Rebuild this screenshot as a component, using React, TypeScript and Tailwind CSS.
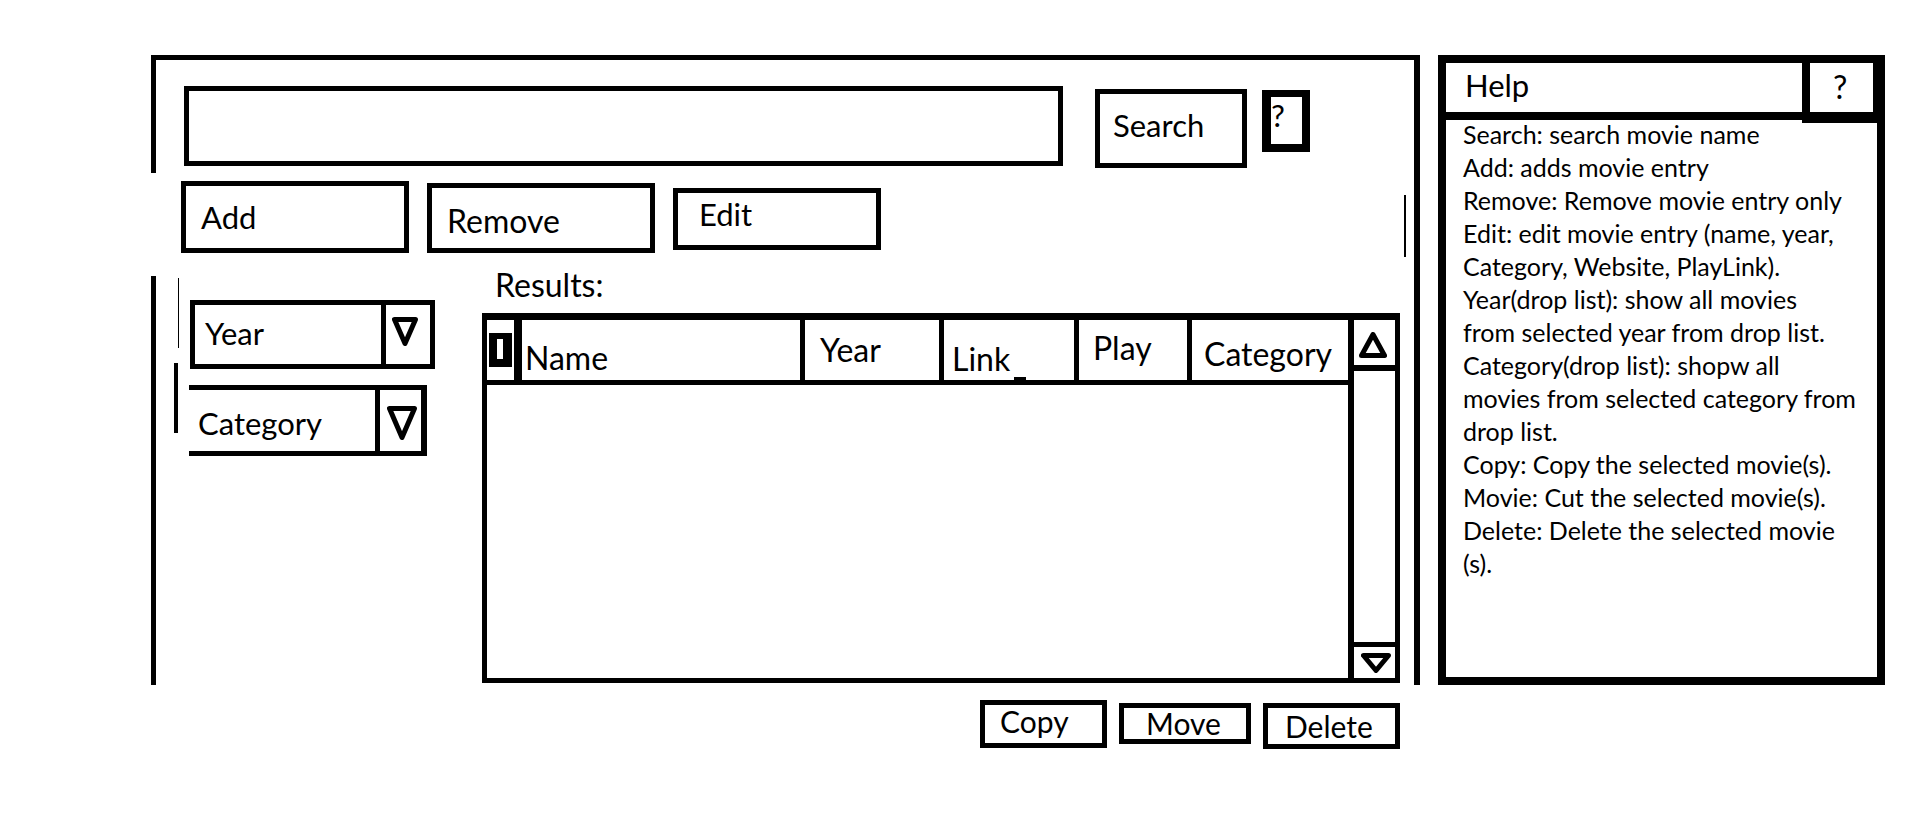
import React from 'react';

// outlined triangle used by the drop lists and the scroll bar
const Tri = ({ up = false, w, h, stroke = 5 }: { up?: boolean; w: number; h: number; stroke?: number }) => {
  const s = stroke / 2;
  const pts = up
    ? `${w / 2},${s} ${w - s},${h - s} ${s},${h - s}`
    : `${s},${s} ${w - s},${s} ${w / 2},${h - s}`;
  return (
    <svg width={w} height={h} viewBox={`0 0 ${w} ${h}`} className="block">
      <polygon points={pts} fill="none" stroke="black" strokeWidth={stroke} strokeLinejoin="round" />
    </svg>
  );
};

const helpLines = [
  'Search: search movie name',
  'Add: adds movie entry',
  'Remove: Remove movie entry only',
  'Edit: edit movie entry (name, year,',
  'Category, Website, PlayLink).',
  'Year(drop list): show all movies',
  'from selected year from drop list.',
  'Category(drop list): shopw all',
  'movies from selected category from',
  'drop list.',
  'Copy: Copy the selected movie(s).',
  'Movie: Cut the selected movie(s).',
  'Delete: Delete the selected movie',
  '(s).',
];

export default function App() {
  return (
    <div className="w-[1912px] h-[828px] bg-white text-black font-['Lato',sans-serif] flex flex-col overflow-hidden">
      <div className="flex items-start pt-[55px] pl-[151px]">
        {/* main window */}
        <div className="w-[1269px] h-[630px] border-t-[5px] border-r-[6px] border-black flex shrink-0">
          <div className="w-[5px] flex flex-col shrink-0">
            <div className="h-[114px] bg-black" />
            <div className="mt-[103px] h-[411px] bg-black" />
          </div>
          <div className="flex-1 flex flex-col">
            {/* search row */}
            <div className="flex items-start">
              <div className="ml-[28px] mt-[26px] w-[879px] h-[80px] border-[5px] border-black" />
              <div className="ml-[32px] mt-[29px] w-[152px] h-[79px] border-[5px] border-black pl-[13px] pt-[16px] text-[31px] leading-none">
                Search
              </div>
              <div className="ml-[15px] mt-[30px] w-[48px] h-[62px] border-l-[9px] border-r-[8px] border-t-[7px] border-b-[8px] border-black pt-[3px] text-[31px] leading-none">
                ?
              </div>
            </div>

            {/* add / remove / edit */}
            <div className="flex items-start">
              <div className="ml-[25px] mt-[13px] w-[228px] h-[72px] border-[5px] border-black pl-[15px] pt-[16px] text-[31px] leading-none">
                Add
              </div>
              <div className="ml-[18px] mt-[15px] w-[228px] h-[70px] border-[5px] border-black pl-[15px] pt-[17px] text-[32px] leading-none">
                Remove
              </div>
              <div className="ml-[18px] mt-[20px] w-[208px] h-[62px] border-[5px] border-black pl-[21px] pt-[6px] text-[31px] leading-none">
                Edit
              </div>
              <div className="ml-[523px] mt-[27px] w-[2px] h-[62px] bg-black" />
            </div>

            {/* filters + results */}
            <div className="flex items-start">
              <div className="ml-[18px] w-[5px] flex flex-col">
                <div className="ml-[4px] mt-[21px] w-[1px] h-[70px] bg-black" />
                <div className="mt-[15px] w-[4px] h-[70px] bg-black" />
              </div>

              <div className="ml-[10px] flex flex-col">
                <div className="ml-[1px] mt-[43px] w-[245px] h-[69px] border-[5px] border-black flex">
                  <div className="w-[186px] pl-[10px] pt-[13px] text-[31px] leading-none">Year</div>
                  <div className="w-[5px] bg-black" />
                  <div className="pl-[6px] pt-[12px]">
                    <Tri w={26} h={29} />
                  </div>
                </div>
                <div className="mt-[16px] w-[238px] h-[71px] border-t-[5px] border-b-[5px] border-r-[6px] border-black flex">
                  <div className="w-[186px] pl-[9px] pt-[18px] text-[31px] leading-none">Category</div>
                  <div className="w-[5px] bg-black" />
                  <div className="pl-[7px] pt-[16px]">
                    <Tri w={30} h={34} />
                  </div>
                </div>
              </div>

              <div className="ml-[47px] flex flex-col">
                <div className="mt-[12px] pl-[13px] h-[31px] text-[32px] leading-none">Results:</div>
                <div className="mt-[13px] w-[918px] h-[370px] border-t-[7px] border-x-[5px] border-b-[5px] border-black flex">
                  <div className="flex-1 flex flex-col">
                    <div className="h-[65px] border-b-[5px] border-black flex text-[32px] leading-none">
                      <div className="w-[27px]">
                        <div className="ml-[2px] mt-[13px] w-[23px] h-[34px] bg-black pl-[8px] pt-[6px]">
                          <div className="w-[6px] h-[20px] bg-white" />
                        </div>
                      </div>
                      <div className="w-[8px] bg-black" />
                      <div className="w-[278px] pl-[3px] pt-[22px]">Name</div>
                      <div className="w-[5px] bg-black" />
                      <div className="w-[134px] pl-[15px] pt-[14px]">Year</div>
                      <div className="w-[5px] bg-black" />
                      <div className="relative w-[130px] pl-[8px] pt-[23px]">
                        Link
                        <div className="absolute left-[70px] top-[57px] w-[12px] h-[8px] bg-black" />
                      </div>
                      <div className="w-[5px] bg-black" />
                      <div className="w-[108px] pl-[14px] pt-[12px]">Play</div>
                      <div className="w-[5px] bg-black" />
                      <div className="flex-1 pl-[12px] pt-[18px]">Category</div>
                    </div>
                  </div>
                  <div className="w-[47px] border-l-[6px] border-black flex flex-col">
                    <div className="h-[51px] border-b-[6px] border-black pl-[5px] pt-[12px]">
                      <Tri up w={28} h={26} />
                    </div>
                    <div className="flex-1" />
                    <div className="h-[36px] border-t-[5px] border-black pl-[7px] pt-[6px]">
                      <Tri w={30} h={20} />
                    </div>
                  </div>
                </div>
              </div>
            </div>
          </div>
        </div>

        {/* help panel */}
        <div className="ml-[18px] w-[447px] h-[630px] border-[8px] border-black flex flex-col shrink-0">
          <div className="h-[49px] flex">
            <div className="w-[356px] pl-[19px] pt-[7px] text-[31px] leading-none">Help</div>
            <div className="w-[8px] bg-black" />
            <div className="w-[63px] pl-[23px] pt-[8px] text-[32px] leading-none">?</div>
            <div className="flex-1 bg-black" />
          </div>
          <div className="flex items-start">
            <div className="w-[356px] h-[8px] bg-black" />
            <div className="flex-1 h-[11px] bg-black" />
          </div>
          <div className="-mt-[5px] pl-[17px] text-[25px] leading-[33px]">
            {helpLines.map((l) => (
              <div key={l} className="whitespace-nowrap">{l}</div>
            ))}
          </div>
        </div>
      </div>

      {/* copy / move / delete */}
      <div className="flex items-start pl-[980px] text-[30px] leading-none">
        <div className="mt-[15px] w-[127px] h-[48px] border-[5px] border-black pl-[15px] pt-[1px]">Copy</div>
        <div className="ml-[12px] mt-[18px] w-[132px] h-[41px] border-[5px] border-black pl-[22px] -pt-[1px]">Move</div>
        <div className="ml-[12px] mt-[18px] w-[137px] h-[46px] border-[5px] border-black pl-[17px] pt-[3px]">Delete</div>
      </div>
    </div>
  );
}
